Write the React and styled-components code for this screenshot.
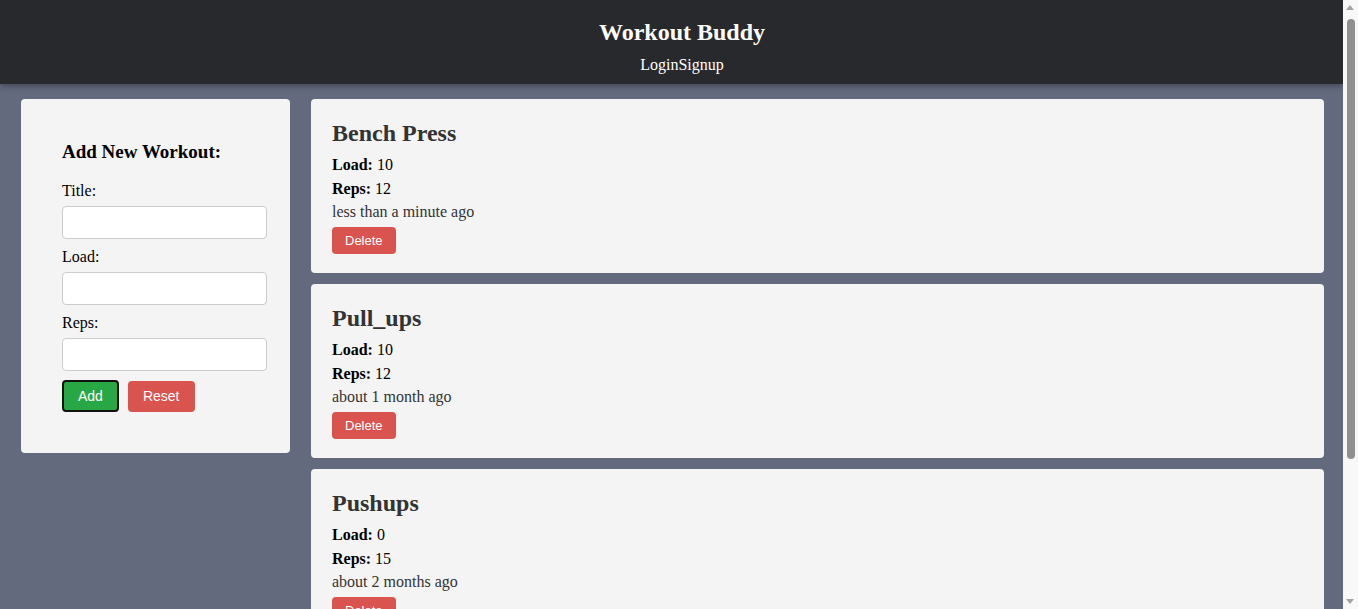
import React from "react";
import styled, { createGlobalStyle } from "styled-components";

const GlobalStyle = createGlobalStyle`
  html, body {
    margin: 0;
    padding: 0;
  }
  body {
    font-family: "Liberation Serif", "Times New Roman", serif;
    background-color: #636a7e;
    color: #000;
  }
`;

const Shell = styled.div`
  margin-right: 15px;
`;

const ScrollBar = styled.div`
  position: fixed;
  top: 0;
  right: 0;
  bottom: 0;
  width: 15px;
  background-color: #f8f8f8;
  z-index: 5;
`;

const ScrollArrow = styled.div`
  position: absolute;
  left: 3px;
  width: 0;
  height: 0;
  border-left: 4.5px solid transparent;
  border-right: 4.5px solid transparent;
  ${(p) =>
    p.$down
      ? "bottom: 5px; border-top: 5px solid #a3a3a3;"
      : "top: 5px; border-bottom: 5px solid #a3a3a3;"}
`;

const ScrollThumb = styled.div`
  position: absolute;
  top: 19px;
  left: 4px;
  width: 8px;
  height: 440px;
  border-radius: 4px;
  background-color: #8f8f8f;
`;

const Header = styled.header`
  position: relative;
  z-index: 1;
  height: 84px;
  padding-left: 21px;
  background-color: #27292c;
  color: #fff;
  text-align: center;
  box-shadow: 0 2px 6px rgba(0, 0, 0, 0.35);
`;

const Brand = styled.h1`
  margin: 0;
  padding-top: 18px;
  font-size: 24px;
  line-height: 28px;
  font-weight: bold;
`;

const Nav = styled.nav`
  margin-top: 10px;
  font-size: 16px;
  line-height: 18px;
`;

const NavLink = styled.span`
  color: #fff;
`;

const Page = styled.main`
  display: grid;
  grid-template-columns: 269px 1fr;
  gap: 21px;
  align-items: start;
  padding: 15px 19px 160px 21px;
`;

const FormPanel = styled.form`
  background-color: #f4f4f4;
  border-radius: 4px;
  padding: 42px 22px 41px 41px;
`;

const FormTitle = styled.h3`
  margin: 0 0 19px;
  font-size: 19px;
  line-height: 22px;
`;

const Label = styled.label`
  display: block;
  font-size: 16px;
  line-height: 18px;
  margin-bottom: 6px;
`;

const Input = styled.input`
  display: block;
  box-sizing: border-box;
  width: 205px;
  height: 33px;
  margin: 0 0 9px;
  border: 1px solid #ccc;
  border-radius: 4px;
  background: #fff;
`;

const ButtonRow = styled.div`
  display: flex;
  align-items: center;
  gap: 9px;
`;

const Button = styled.button`
  font-family: "Liberation Sans", Arial, sans-serif;
  font-size: 14px;
  color: #fff;
  border-radius: 4px;
  cursor: pointer;
  background-color: ${(p) => (p.$variant === "add" ? "#28a745" : "#d9534f")};
  border: ${(p) => (p.$variant === "add" ? "2px solid #111" : "none")};
  line-height: ${(p) => (p.$variant === "add" ? "16px" : "17px")};
  padding: ${(p) => (p.$variant === "add" ? "6px 14px" : "7px 15px")};
`;

const List = styled.div`
  display: flex;
  flex-direction: column;
  gap: 11px;
`;

const Card = styled.div`
  background-color: #f4f4f4;
  border-radius: 4px;
  padding: 20px 21px 19.5px;
`;

const CardTitle = styled.h4`
  margin: 0 0 9px;
  font-size: 24px;
  line-height: 28px;
  color: #333;
`;

const Line = styled.p`
  margin: 0 0 5px;
  font-size: 16px;
  line-height: 18.5px;
  color: ${(p) => (p.$muted ? "#333" : "#000")};
`;

const DeleteButton = styled.button`
  font-family: "Liberation Sans", Arial, sans-serif;
  font-size: 13px;
  line-height: 15px;
  padding: 6px 13px;
  color: #fff;
  background-color: #d9534f;
  border: none;
  border-radius: 4px;
  cursor: pointer;
`;

const workouts = [
  { id: 1, title: "Bench Press", load: 10, reps: 12, when: "less than a minute ago" },
  { id: 2, title: "Pull_ups", load: 10, reps: 12, when: "about 1 month ago" },
  { id: 3, title: "Pushups", load: 0, reps: 15, when: "about 2 months ago" },
];

function WorkoutForm() {
  return (
    <FormPanel onSubmit={(e) => e.preventDefault()}>
      <FormTitle>Add New Workout:</FormTitle>
      <Label>Title:</Label>
      <Input type="text" />
      <Label>Load:</Label>
      <Input type="number" />
      <Label>Reps:</Label>
      <Input type="number" />
      <ButtonRow>
        <Button $variant="add">Add</Button>
        <Button type="reset">Reset</Button>
      </ButtonRow>
    </FormPanel>
  );
}

function WorkoutCard({ workout }) {
  return (
    <Card>
      <CardTitle>{workout.title}</CardTitle>
      <Line><strong>Load: </strong>{workout.load}</Line>
      <Line><strong>Reps: </strong>{workout.reps}</Line>
      <Line $muted>{workout.when}</Line>
      <DeleteButton>Delete</DeleteButton>
    </Card>
  );
}

export default function App() {
  return (
    <Shell>
      <GlobalStyle />
      <Header>
        <Brand>Workout Buddy</Brand>
        <Nav>
          <NavLink>Login</NavLink>
          <NavLink>Signup</NavLink>
        </Nav>
      </Header>
      <Page>
        <WorkoutForm />
        <List>
          {workouts.map((w) => (
            <WorkoutCard key={w.id} workout={w} />
          ))}
        </List>
      </Page>
      <ScrollBar>
        <ScrollArrow />
        <ScrollThumb />
        <ScrollArrow $down />
      </ScrollBar>
    </Shell>
  );
}
